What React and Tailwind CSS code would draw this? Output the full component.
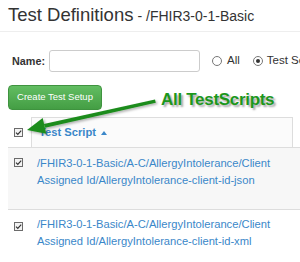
import React from 'react'

const font = { fontFamily: '"Liberation Sans", Arial, sans-serif' }

function Check() {
  return (
    <svg width="9" height="9" viewBox="0 0 9 9" className="block">
      <rect x="0.5" y="0.5" width="8" height="8" fill="#f3f3f3" stroke="#6b6b6b" />
      <path d="M2 4.6 L3.8 6.4 L7.2 2.6" fill="none" stroke="#333" strokeWidth="1.2" />
    </svg>
  )
}

function Radio({ checked }) {
  return (
    <span className="w-[10px] h-[10px] rounded-full border border-[#777] bg-white flex items-center justify-center shrink-0">
      {checked && <span className="w-[4px] h-[4px] rounded-full bg-[#333]" />}
    </span>
  )
}

const rows = [
  { path: '/FHIR3-0-1-Basic/A-C/AllergyIntolerance/Client', name: 'Assigned Id/AllergyIntolerance-client-id-json' },
  { path: '/FHIR3-0-1-Basic/A-C/AllergyIntolerance/Client', name: 'Assigned Id/AllergyIntolerance-client-id-xml' },
]

export default function App() {
  return (
    <div className="relative w-[300px] h-[262px] overflow-hidden bg-white text-[#333]" style={font}>
      <div className="h-[32px] pl-2 pt-[3px] border-b border-[#eee] flex items-baseline whitespace-nowrap">
        <span className="text-[18.5px] leading-[24px]">Test Definitions</span>
        <span className="text-[14px] ml-[4px]">- /FHIR3-0-1-Basic</span>
      </div>

      <div className="mt-[18px] h-[22px] pl-3 flex items-center whitespace-nowrap text-[11px]">
        <span className="font-bold text-[10.8px]">Name:</span>
        <span className="ml-[4px] w-[151px] h-[22px] border border-[#ccc] rounded-[3px] bg-white shrink-0" />
        <span className="ml-[12px]"><Radio /></span>
        <span className="ml-[5px] text-[11.5px]">All</span>
        <span className="ml-[13px]"><Radio checked /></span>
        <span className="ml-[4px] text-[11.5px]">Test Scripts</span>
      </div>

      <div className="mt-[13px] ml-2 w-[94px] h-[25px] rounded-[4px] border border-[#3f933f] bg-gradient-to-b from-[#62bd62] to-[#449e44] text-white text-[9.5px] flex items-center justify-center">
        Create Test Setup
      </div>

      <div className="mt-[7px] ml-2">
        <div className="flex h-[31px] border-b border-[#ddd]">
          <div className="w-[23px] pl-[6px] flex items-center"><Check /></div>
          <div className="w-[262px] border-t border-x border-[#ddd] bg-[#fbfbfb] pl-[7px] flex items-center gap-[5px] text-[11.2px] font-bold text-[#3a87c9]">
            Test Script
            <svg width="6" height="4" viewBox="0 0 6 4"><path d="M0 4 L3 0 L6 4 Z" fill="#3a87c9" /></svg>
          </div>
        </div>
        {rows.map((r, i) => (
          <div key={i} className={`flex h-[62px] ${i === 0 ? 'bg-[#f7f7f7] border-b border-[#ddd]' : ''}`}>
            <div className={`w-[23px] pl-[6px] ${i === 0 ? 'pt-[10px]' : 'pt-[12px]'}`}><Check /></div>
            <div className={`pl-[6px] text-[11.2px] leading-[17px] text-[#3a87c9] whitespace-nowrap ${i === 0 ? 'pt-[7px]' : 'pt-[6px]'}`}>
              <div>{r.path}</div>
              <div>{r.name}</div>
            </div>
          </div>
        ))}
      </div>

      <svg className="absolute left-0 top-0 pointer-events-none" width="300" height="262" viewBox="0 0 300 262">
        <defs>
          <filter id="sh" x="-20%" y="-20%" width="140%" height="140%">
            <feDropShadow dx="1.5" dy="1.5" stdDeviation="1" floodColor="#000" floodOpacity="0.3" />
          </filter>
        </defs>
        <g filter="url(#sh)" fill="#1e8c1e">
          <polygon points="155,99.5 155.8,102.8 45.2,127.8 43.8,124" />
          <polygon points="27,130 42.7,118.1 46.3,133.7" />
        </g>
      </svg>
      <div
        className="absolute left-[161px] top-[90px] text-[17px] leading-[20px] font-bold tracking-[-0.3px] text-[#1c971c] whitespace-nowrap [text-shadow:2px_2px_2px_rgba(0,0,0,0.35)]"
      >
        All TestScripts
      </div>
    </div>
  )
}
